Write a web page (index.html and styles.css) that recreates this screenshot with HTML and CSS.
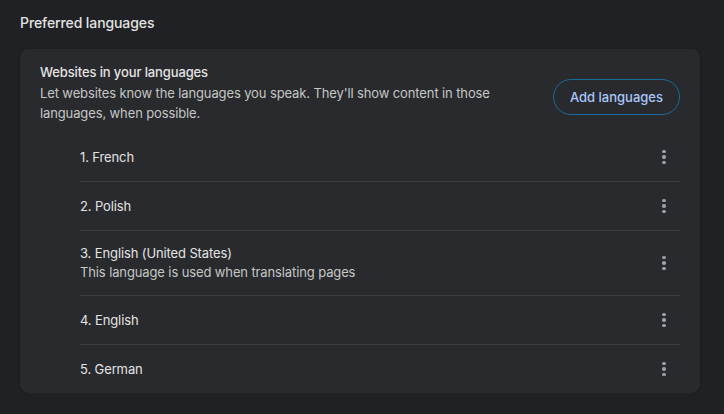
FILE: index.html
```html
<!DOCTYPE html>
<html>
<head>
<meta charset="utf-8">
<link rel="stylesheet" href="styles.css">
</head>
<body>
<main class="page">
  <h2 class="section-title">Preferred languages</h2>
  <section class="card">
    <div class="card-head">
      <div class="head-text">
        <div class="head-title">Websites in your languages</div>
        <div class="head-desc">Let websites know the languages you speak. They'll show content in those languages, when possible.</div>
      </div>
      <button class="add-btn">Add languages</button>
    </div>
    <ul class="lang-list">
      <li class="lang-row"><div class="lang-text"><div class="lang-name">1. French</div></div><span class="more"><i></i><i></i><i></i></span></li>
      <li class="lang-row"><div class="lang-text"><div class="lang-name">2. Polish</div></div><span class="more"><i></i><i></i><i></i></span></li>
      <li class="lang-row tall"><div class="lang-text"><div class="lang-name">3. English (United States)</div><div class="lang-sub">This language is used when translating pages</div></div><span class="more"><i></i><i></i><i></i></span></li>
      <li class="lang-row"><div class="lang-text"><div class="lang-name">4. English</div></div><span class="more"><i></i><i></i><i></i></span></li>
      <li class="lang-row"><div class="lang-text"><div class="lang-name">5. German</div></div><span class="more"><i></i><i></i><i></i></span></li>
    </ul>
  </section>
</main>
</body>
</html>
```
FILE: styles.css
```css
html, body {
  margin: 0;
  padding: 0;
  background: #202124;
}
body {
  font-family: Inter, "Noto Sans", sans-serif;
  color: #e3e3e3;
  font-size: 13px;
  letter-spacing: -0.12px;
}
.page {
  padding: 13px 24px 0 20px;
}
.section-title {
  margin: 0;
  font-size: 14px;
  font-weight: 500;
  line-height: 20px;
  color: #e3e3e3;
  letter-spacing: -0.1px;
}
.card {
  margin-top: 16px;
  background: #292a2d;
  border-radius: 8px;
  box-shadow: 0 1px 2px rgba(0,0,0,0.35);
  padding: 14px 20px 0 20px;
}
.card-head {
  display: flex;
  align-items: center;
  justify-content: space-between;
  gap: 40px;
}
.head-text {
  flex: 1;
  max-width: 470px;
}
.head-title {
  font-size: 13px;
  line-height: 18px;
  color: #e3e3e3;
  font-weight: 500;
}
.head-desc {
  font-size: 13px;
  line-height: 20px;
  color: #c4c7c5;
  margin-top: 2px;
}
.add-btn {
  font-family: inherit;
  font-size: 13px;
  font-weight: 500;
  letter-spacing: 0;
  color: #a8c7fa;
  background: transparent;
  border: 1px solid #186b98;
  border-radius: 18px;
  height: 36px;
  padding: 0 16px;
  margin-top: 8px;
  flex-shrink: 0;
}
.lang-list {
  list-style: none;
  margin: 10px 0 0 0;
  padding: 0 0 0 40px;
}
.lang-row {
  display: flex;
  align-items: center;
  justify-content: space-between;
  min-height: 48px;
  border-top: 1px solid #3c3d40;
}
.lang-row:first-child {
  border-top: none;
}
.lang-row.tall {
  min-height: 64px;
}
.lang-name {
  line-height: 18px;
  color: #e3e3e3;
}
.lang-sub {
  line-height: 20px;
  color: #c4c7c5;
}
.more {
  display: flex;
  flex-direction: column;
  align-items: center;
  gap: 2px;
  width: 20px;
  margin-right: 6px;
}
.more i {
  display: block;
  width: 3.5px;
  height: 3.5px;
  border-radius: 50%;
  background: #9aa0a6;
}
```
